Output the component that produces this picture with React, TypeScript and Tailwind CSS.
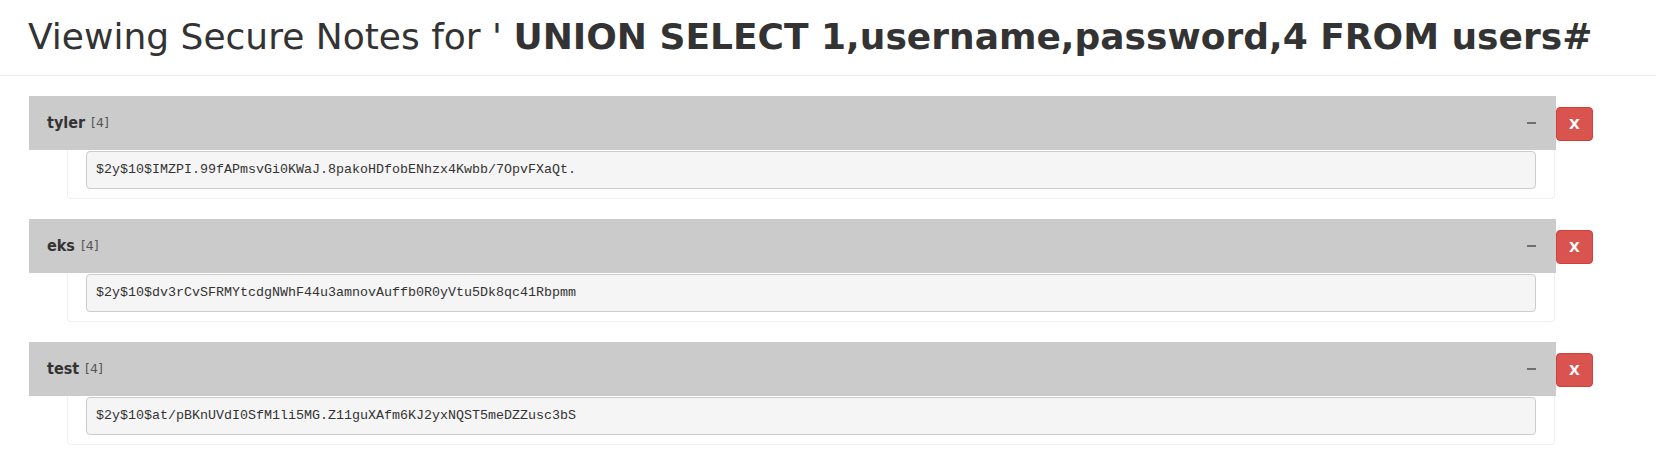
const notes = [
  { user: 'tyler', count: 4, hash: '$2y$10$IMZPI.99fAPmsvGi0KWaJ.8pakoHDfobENhzx4Kwbb/7OpvFXaQt.' },
  { user: 'eks', count: 4, hash: '$2y$10$dv3rCvSFRMYtcdgNWhF44u3amnovAuffb0R0yVtu5Dk8qc41Rbpmm' },
  { user: 'test', count: 4, hash: '$2y$10$at/pBKnUVdI0SfM1li5MG.Z11guXAfm6KJ2yxNQST5meDZZusc3bS' },
];

function NotePanel({ user, count, hash }: { user: string; count: number; hash: string }) {
  return (
    <div className="flex items-start">
      <div className="w-[1527px]">
        <div className="h-[54px] bg-[#cbcbcb] flex items-center pl-[18px] pr-[20px]">
          <span className="text-[16px] font-bold text-[#333] font-['DejaVu_Sans_Condensed','DejaVu_Sans',sans-serif]">
            {user}
          </span>
          <span className="ml-[6px] text-[12.5px] text-[#555] font-['DejaVu_Sans',sans-serif]">[{count}]</span>
          <div className="ml-auto w-[9px] h-[2px] bg-[#6f6f6f]" />
        </div>
        <div className="ml-[38px] mr-[1px] border border-t-0 border-[#f0f0f0] rounded-b-[4px] pt-[1px] pb-[9px] px-[18px]">
          <pre className="h-[38px] flex items-center px-[9px] bg-[#f5f5f5] border border-[#ccc] rounded-[4px] text-[13.33px] text-[#333] font-['Liberation_Mono',monospace]">
            {hash}
          </pre>
        </div>
      </div>
      <button className="mt-[11px] w-[37px] h-[34px] bg-[#d9534f] border border-[#d43f3a] rounded-[4px] text-white text-[14px] font-bold font-['DejaVu_Sans',sans-serif] flex items-center justify-center">
        X
      </button>
    </div>
  );
}

export default function App() {
  return (
    <div className="w-[1656px] h-[452px] bg-white text-[#333] overflow-hidden">
      <div className="h-[76px] border-b border-[#eee] pt-[17px] pl-[28px]">
        <h1 className="text-[36px] leading-[40px] whitespace-nowrap font-['DejaVu_Sans',sans-serif]">
          Viewing Secure Notes for '{' '}
          <b className="font-bold">UNION SELECT 1,username,password,4 FROM users#</b>
        </h1>
      </div>
      <div className="pl-[29px] pt-[20px] flex flex-col gap-[20px]">
        {notes.map((n) => (
          <NotePanel key={n.user} {...n} />
        ))}
      </div>
    </div>
  );
}
